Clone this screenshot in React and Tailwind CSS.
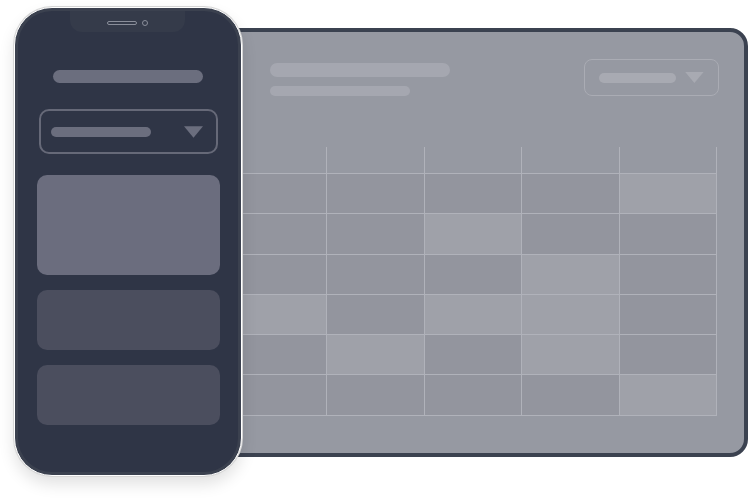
import React from 'react';

// which cells of the week grid are lighter
const lightCells = [
  [0, 0, 0, 0, 1],
  [0, 0, 1, 0, 0],
  [0, 0, 0, 1, 0],
  [1, 0, 1, 1, 0],
  [0, 1, 0, 1, 0],
  [0, 0, 0, 0, 1],
];

const Triangle = ({ className }) => (
  <svg viewBox="0 0 20 12" className={className}>
    <path d="M0 0 H20 L10 12 Z" fill="currentColor" />
  </svg>
);

const Tablet = () => {
  return (
    <div className="ml-[210px] mt-[28px] w-[538px] h-[429px] rounded-[18px] border-4 border-[#3b4250] bg-[#9699a2] overflow-hidden">
      <div className="flex justify-between pl-[56px] pr-[25px] pt-[27px]">
        <div className="flex flex-col gap-[9px] pt-[4px]">
          <div className="w-[180px] h-[14px] rounded-full bg-[#a5a7b0]" />
          <div className="w-[140px] h-[10px] rounded-full bg-[#a5a7b0]" />
        </div>
        <div className="w-[135px] h-[37px] rounded-[8px] border-[1.5px] border-[#aaacb4] flex items-center pl-[14px] pr-[13px] gap-[8px]">
          <div className="w-[78px] h-[10px] rounded-full bg-[#a8aab2]" />
          <Triangle className="w-[21px] h-[11px] text-[#a8aab2]" />
        </div>
      </div>

      <div className="ml-[16px] mt-[51px] w-[487px]">
        <div className="grid grid-cols-5 h-[27px] border-b border-[#b0b2ba]">
          {[0, 1, 2, 3, 4].map((c) => (
            <div key={c} className="border-r border-[#b0b2ba]" />
          ))}
        </div>
        {lightCells.map((row, r) => (
          <div key={r} className="grid grid-cols-5 h-[40.3px]">
            {row.map((light, c) => (
              <div
                key={c}
                className={
                  'border-r border-b border-[#b0b2ba] ' +
                  (light ? 'bg-[#9fa1a9]' : 'bg-[#93959e]')
                }
              />
            ))}
          </div>
        ))}
      </div>
    </div>
  );
};

const Phone = () => {
  return (
    <div className="absolute left-[14px] top-[7px] w-[228px] h-[469px] rounded-[38px] border border-white bg-[#3b414f] p-[3px] shadow-[0_0_0_1px_#d6d6d6,0_8px_16px_rgba(0,0,0,0.12)]">
      <div className="relative w-full h-full rounded-[34px] bg-[#2f3546] flex flex-col items-center">
        <div className="absolute left-[52px] top-0 w-[115px] h-[21px] rounded-b-[12px] bg-[#353b4a] flex items-center justify-center gap-[5px] pt-[3px]">
          <div className="w-[30px] h-[4px] rounded-full border border-[#8a8e9a]" />
          <div className="w-[6px] h-[6px] rounded-full border border-[#8a8e9a]" />
        </div>

        <div className="mt-[59px] w-[150px] h-[13px] rounded-full bg-[#6b6e7e]" />

        <div className="mt-[26px] w-[179px] h-[45px] rounded-[10px] border-2 border-[#666978] flex items-center justify-between pl-[10px] pr-[13px]">
          <div className="w-[100px] h-[10px] rounded-full bg-[#6b6e7e]" />
          <Triangle className="w-[19px] h-[12px] text-[#6b6e7e]" />
        </div>

        <div className="mt-[21px] w-[183px] flex flex-col gap-[15px]">
          <div className="h-[100px] rounded-[10px] bg-[#6b6d7e]" />
          <div className="h-[60px] rounded-[10px] bg-[#4b4e5e]" />
          <div className="h-[60px] rounded-[10px] bg-[#4b4e5e]" />
        </div>
      </div>
    </div>
  );
};

const App = () => {
  return (
    <div className="relative w-[750px] h-[500px] bg-white overflow-hidden">
      <Tablet />
      <Phone />
    </div>
  );
};

export default App;
